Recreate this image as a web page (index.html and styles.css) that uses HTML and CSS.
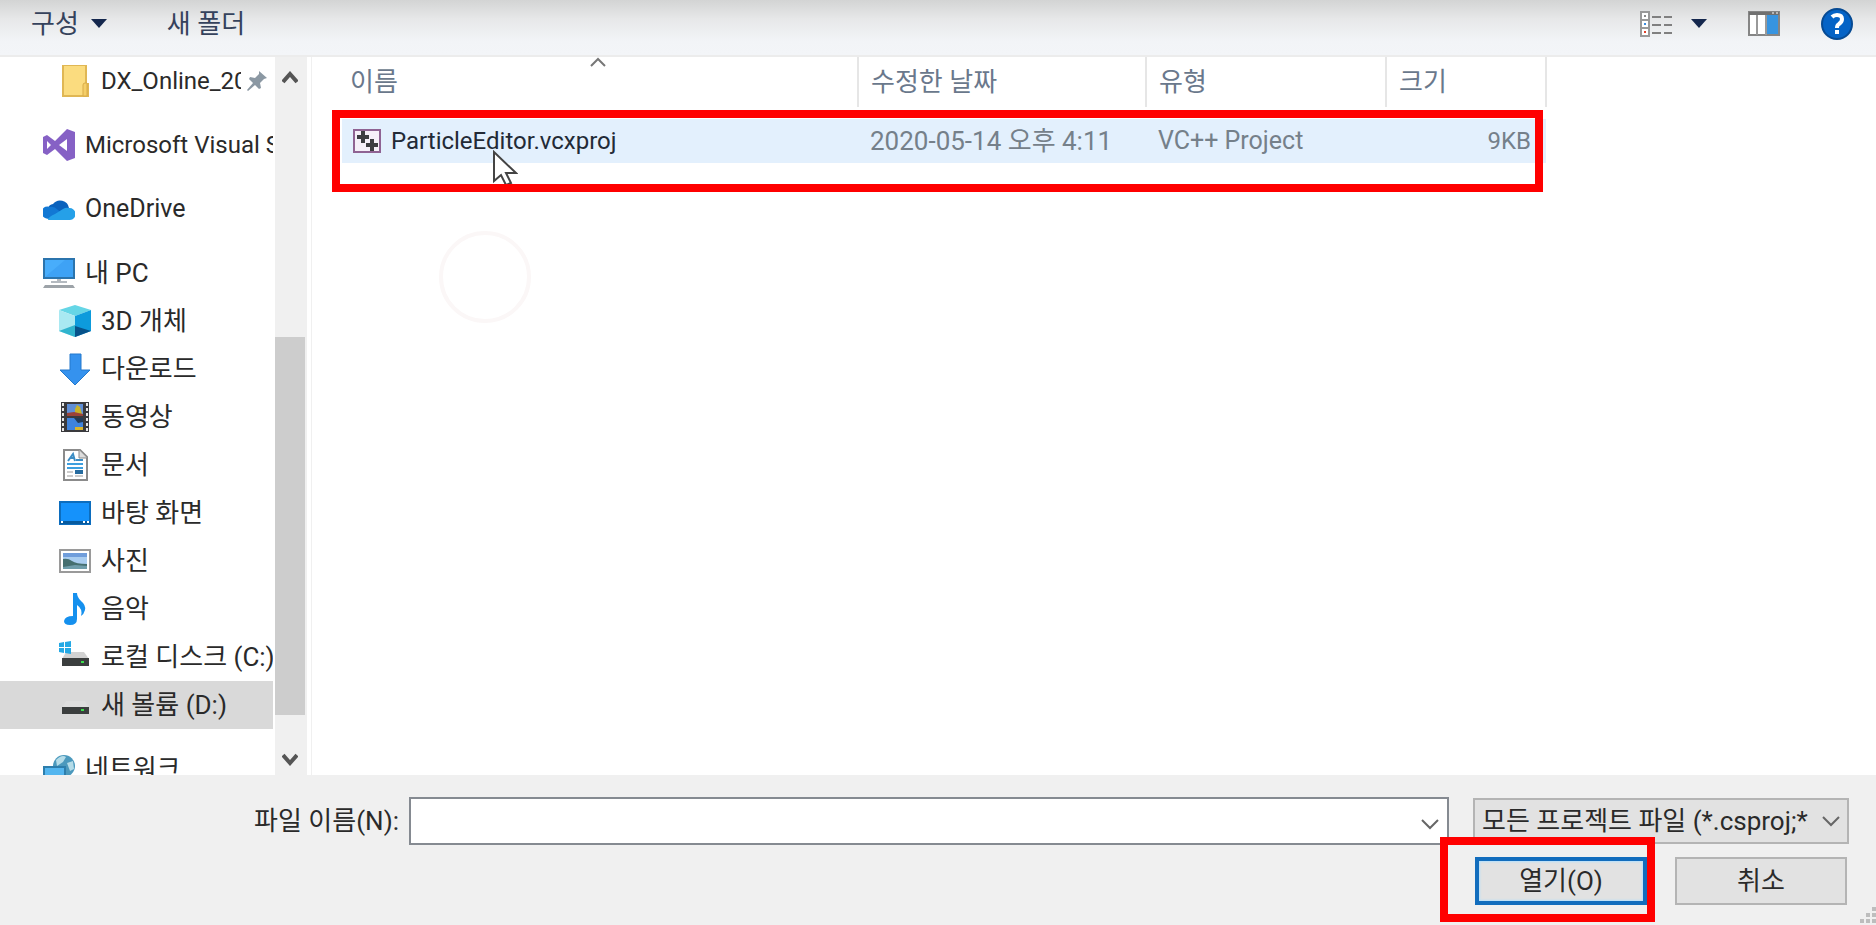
FILE: index.html
```
<!DOCTYPE html>
<html lang="ko">
<head>
    <meta charset="UTF-8">
    <meta name="viewport" content="width=device-width, initial-scale=1.0">
    <title>프로젝트 열기</title>
    <link rel="stylesheet" href="styles.css">
</head>
<body>

<header class="toolbar">
    <button class="tool" type="button">구성
        <svg width="16" height="9" viewBox="0 0 16 9"><path d="M0 0h16L8 9z" fill="#14274d"/></svg>
    </button>
    <button class="tool" type="button">새 폴더</button>
    <div class="toolbar-right">
        <button class="tool" type="button" aria-label="보기 변경">
            <svg width="34" height="28" viewBox="0 0 34 28">
                <path d="M2 2h8v24H2zM2 10h8M2 18h8" fill="#fff" stroke="#999" stroke-width="2"/>
                <path d="M13 7h9M25 7h8M13 15h9M25 15h8M13 23h9M25 23h8" stroke="#808080" stroke-width="2"/>
                <path d="M5 5h2v2H5z" fill="#888"/><path d="M5 13h2v2H5z" fill="#3b8de0"/><path d="M5 21h2v2H5z" fill="#e0402a"/>
            </svg>
            <svg width="16" height="9" viewBox="0 0 16 9"><path d="M0 0h16L8 9z" fill="#14274d"/></svg>
        </button>
        <button class="tool" type="button" aria-label="미리 보기 창">
            <svg width="32" height="25" viewBox="0 0 32 25">
                <path d="M1 1h30v23H1z" fill="#fff" stroke="#858585" stroke-width="2"/>
                <path d="M1 1h30v3H1z" fill="#707070"/>
                <path d="M9 4v20M18 4v20" stroke="#999" stroke-width="2"/>
                <path d="M19 4h11v19H19z" fill="#3794e0"/>
                <path d="M24 2h2M28 2h2" stroke="#fff" stroke-width="1"/>
            </svg>
        </button>
        <button class="tool" type="button" aria-label="도움말">
            <svg width="32" height="32" viewBox="0 0 32 32">
                <circle cx="16" cy="16" r="15" fill="#0563c6" stroke="#064a93" stroke-width="2"/>
                <path d="M11 9q2-2 5-2 5 0 5 4 0 3-3 5-2 1-2 4" fill="none" stroke="#fff" stroke-width="4"/>
                <path d="M14 22h4v4h-4z" fill="#fff"/>
            </svg>
        </button>
    </div>
</header>

<main class="browser">
    <nav class="tree">
        <ul>
            <li class="child latin">
                <a href="#dx"><svg class="icon" viewBox="0 0 32 32"><path d="M4 0h23v19h2v12H4z" fill="#fbdc7f" stroke="#e0b754" stroke-width="2"/><path d="M24 31V20q0-2 2-2h2v13z" fill="#f5cf69" stroke="#d9ac48"/></svg><span class="pinned">DX_Online_2020</span><svg class="pin" width="22" height="22" viewBox="0 0 22 22"><path d="M13 1l8 7-3 1-4 4 1 5-2 1-4-4-7 6-1-1 6-7-4-4 1-2 5 1 4-4z" fill="#8b98a3"/></svg></a>
            </li>
            <li class="group latin">
                <a href="#vs"><svg class="icon" viewBox="0 0 32 32"><path d="M24 0l8 3v26l-8 3L12 20l-8 6-4-2V8l4-2 8 6zM4 12v8l4-4zM16 16l8 6V10z" fill="#8661c5" fill-rule="evenodd"/></svg>Microsoft Visual Studio</a>
            </li>
            <li class="group">
                <a href="#onedrive"><svg class="icon" viewBox="0 0 32 32"><path d="M5 15a6 6 0 0 1 5-4 9 9 0 0 1 16 4l-8 8H5a6 6 0 0 1 0-8z" fill="#0a62bd"/><path d="M2 25a6 6 0 0 1 5-11q4-1 8 3l10 9H7q-3 0-5-1z" fill="#1278d4"/><path d="M5 27q0-3 7-6l8-5q3-2 6-1a6 6 0 0 1 1 12z" fill="#25a0e8"/></svg><span class="account">OneDrive</span></a>
            </li>
            <li class="group">
                <a href="#pc"><svg class="icon" viewBox="0 0 32 32"><path d="M1 2h30v19H1z" fill="#48adfb" stroke="#2b74ad" stroke-width="2"/><path d="M2 20L22 3h8v17z" fill="#3398f0" opacity=".5"/><path d="M14 22h4v2h6v2H8v-2h6z" fill="#b4bac0"/><path d="M2 28h28l2 3H0z" fill="#9da3a8"/></svg>내 PC</a>
                <ul>
                    <li class="child">
                        <a href="#objects"><svg class="icon" viewBox="0 0 32 32"><path d="M0 5l16-5 16 5-16 6z" fill="#65d6e6"/><path d="M0 5l16 6v21L0 26z" fill="#a9e9f2"/><path d="M0 26l16-6v12z" fill="#30b4ce"/><path d="M32 5l-16 6v21l16-6z" fill="#0d9bdc"/><path d="M32 26l-16-5v11z" fill="#07528a"/></svg>3D 개체</a>
                    </li>
                    <li class="child">
                        <a href="#downloads"><svg class="icon" viewBox="0 0 32 32"><path d="M11 1h11v16h9L16 32 1 17h10z" fill="#3592ee" stroke="#2479cc"/></svg>다운로드</a>
                    </li>
                    <li class="child">
                        <a href="#videos"><svg class="icon" viewBox="0 0 32 32"><path d="M2 1h28v30H2z" fill="#3a3a3d"/><path d="M4 2v29M28 2v29" stroke="#e8e8e8" stroke-width="2" stroke-dasharray="3 2"/><path d="M8 3h16v12H8z" fill="#608fd6"/><path d="M8 17h16v12H8z" fill="#3f83dc"/><path d="M16 13V8l2-4 3 2 2 7z" fill="#c8b32b"/><path d="M8 12l7-1 9 2v2H8z" fill="#9b4238"/><path d="M16 29v-3h8v3z" fill="#d8b42c"/><path d="M15 17h9v4l-5 1z" fill="#223b58"/></svg>동영상</a>
                    </li>
                    <li class="child">
                        <a href="#documents"><svg class="icon" viewBox="0 0 32 32"><path d="M5 1h16l7 7v23H5z" fill="#fff" stroke="#8b8b8b" stroke-width="2"/><path d="M20 1v8h8" fill="#ddd" stroke="#8b8b8b"/><path d="M9 12l5-7 2 7M11 9h5M17 11h7" fill="none" stroke="#3c8dc4" stroke-width="2"/><path d="M8 15h16M8 19h16" stroke="#3d9fdf" stroke-width="2"/><path d="M8 23h6M8 27h6M16 27h8" stroke="#999" stroke-width="1"/><path d="M16 21h8v4h-8z" fill="#276ca0"/></svg>문서</a>
                    </li>
                    <li class="child">
                        <a href="#desktop"><svg class="icon" viewBox="0 0 32 32"><path d="M1 5h30v22H1z" fill="#1592fb" stroke="#0c6dbe" stroke-width="2"/><path d="M1 24h30v3H1z" fill="#075a9e"/><path d="M2 25h2M24 25h2M28 25h2" stroke="#fff" stroke-width="2"/></svg>바탕 화면</a>
                    </li>
                    <li class="child">
                        <a href="#pictures"><svg class="icon" viewBox="0 0 32 32"><path d="M1 5h30v22H1z" fill="#fff" stroke="#9a9a9a" stroke-width="2"/><path d="M4 8h24v16H4z" fill="#a9cdf0"/><path d="M4 8h24v4H4z" fill="#6f9ddb"/><path d="M4 14q5-1 9 2t15 3v5H4z" fill="#456f70"/><path d="M4 22l12-2 12 1v3H4z" fill="#6f9dab"/></svg>사진</a>
                    </li>
                    <li class="child">
                        <a href="#music"><svg class="icon" viewBox="0 0 32 32"><path d="M14 0h4q0 4 4 8 5 4 4 9-1 4-4 6 2-7-4-11v14q0 6-7 6-6 0-6-4 1-5 9-5z" fill="#1590ee"/></svg>음악</a>
                    </li>
                    <li class="child">
                        <a href="#c"><svg class="icon" viewBox="0 0 32 32"><path d="M7 11h18l5 7H3z" fill="#d2d2d2"/><path d="M0 2l5-1v5H0zM6 1l6-1v6H6zM0 7h5v5l-5-1zM6 7h6v6l-6-1z" fill="#24a9e5"/><path d="M3 17h27v8H3z" fill="#3b3e3e"/><path d="M22 20h3v2h-3z" fill="#3be04c"/></svg>로컬 디스크 (C:)</a>
                    </li>
                    <li class="child selected">
                        <a href="#d"><svg class="icon" viewBox="0 0 32 32"><path d="M7 12h19l4 7H3z" fill="#dedede"/><path d="M3 18h27v7H3z" fill="#3b3e3e"/><path d="M22 20h3v2h-3z" fill="#3be04c"/></svg>새 볼륨 (D:)</a>
                    </li>
                </ul>
            </li>
            <li class="group">
                <a href="#network"><svg class="icon" viewBox="0 0 32 32"><circle cx="21" cy="13" r="11" fill="#4b99bd"/><path d="M13 7q6-6 10-3l-3 5-6 4zM24 10l6-2 1 8-4 2z" fill="#b5dce8"/><path d="M1 14h21v16H1z" fill="#54b6ef" stroke="#2d7eac" stroke-width="2"/></svg>네트워크</a>
            </li>
        </ul>
    </nav>
    <div class="scrollbar">
        <button type="button" aria-label="위로"><svg width="16" height="13" viewBox="0 0 16 13"><path d="M1 11l7-8 7 8" fill="none" stroke="#555" stroke-width="4"/></svg></button>
        <div class="track-above"></div>
        <div class="thumb"></div>
        <div class="track-below"></div>
        <button type="button" aria-label="아래로"><svg width="16" height="13" viewBox="0 0 16 13"><path d="M1 2l7 8 7-8" fill="none" stroke="#555" stroke-width="4"/></svg></button>
    </div>
    <section class="files">
        <table>
            <thead>
                <tr>
                    <th class="name">이름<svg class="sort" width="16" height="10" viewBox="0 0 16 10"><path d="M1 9l7-7 7 7" fill="none" stroke="#777" stroke-width="2"/></svg></th>
                    <th class="date">수정한 날짜</th>
                    <th class="type">유형</th>
                    <th class="size">크기</th>
                </tr>
            </thead>
            <tbody>
                <tr>
                    <td class="name"><svg width="28" height="24" viewBox="0 0 28 24"><path d="M1 1h26v22H1z" fill="#f5eff8" stroke="#8f6393" stroke-width="2"/><path d="M10 2v12M4 8h12M19 10v12M13 16h12" stroke="#3c3c40" stroke-width="4"/></svg>ParticleEditor.vcxproj</td>
                    <td class="date">2020-05-14 오후 4:11</td>
                    <td class="type">VC++ Project</td>
                    <td class="size">9KB</td>
                </tr>
            </tbody>
        </table>
        <div class="busy"></div>
        <div class="mark mark-file">
            <svg class="cursor" width="26" height="34" viewBox="0 0 26 34"><path d="M2 2v29l7-6 5 10 5-2-5-10h10z" fill="#fff" stroke="#444" stroke-width="2"/></svg>
        </div>
    </section>
</main>

<footer class="footer">
    <div class="line">
        <label for="filename">파일 이름(N):</label>
        <div class="combo">
            <input type="text" id="filename">
            <button type="button" aria-label="최근 파일"><svg width="18" height="11" viewBox="0 0 18 11"><path d="M1 1l8 8 8-8" fill="none" stroke="#666" stroke-width="2"/></svg></button>
        </div>
        <div class="filter">
            <select aria-label="파일 형식">
                <option>모든 프로젝트 파일 (*.csproj;*.vcxproj)</option>
            </select>
            <svg width="18" height="11" viewBox="0 0 18 11"><path d="M1 1l8 8 8-8" fill="none" stroke="#666" stroke-width="2"/></svg>
        </div>
    </div>
    <div class="line actions">
        <div class="open">
            <button class="btn primary" type="button">열기(O)</button>
            <div class="mark mark-open"></div>
        </div>
        <button class="btn" type="button">취소</button>
    </div>
    <svg class="grip" width="16" height="18" viewBox="0 0 16 18"><path d="M12 0h4v4h-4zM6 6h4v4H6zM12 6h4v4h-4zM0 12h4v4H0zM6 12h4v4H6zM12 12h4v4h-4z" fill="#bdbdbd"/></svg>
</footer>

</body>
</html>
```
FILE: styles.css
```
* {
    box-sizing: border-box;
}

body {
    margin: 0;
    height: 100vh;
    display: flex;
    flex-direction: column;
    overflow: hidden;
    background-color: #ffffff;
    color: #2a2a2a;
    font-family: Roboto, "Noto Sans CJK KR", sans-serif;
    font-size: 26px;
    line-height: 32px;
}

button, input, select {
    font: inherit;
    color: inherit;
}

button {
    padding: 0;
    border: none;
    background: none;
}

svg {
    flex: none;
}

ul {
    margin: 0;
    padding: 0;
    list-style: none;
}

/* toolbar */

.toolbar {
    display: flex;
    align-items: center;
    gap: 60px;
    height: 57px;
    flex: none;
    padding: 0 23px 8px 31px;
    background: linear-gradient(#d3d4d4, #e7e8e9 35%, #f2f4f7 75%, #f3f5f8);
    border-bottom: 2px solid #ececec;
    color: #35425c;
}

.tool {
    display: flex;
    align-items: center;
    gap: 12px;
}

.toolbar-right {
    display: flex;
    align-items: center;
    gap: 41px;
    margin-left: auto;
}

.toolbar-right .tool {
    gap: 18px;
}

/* folder tree */

.browser {
    display: flex;
    flex: 1;
    min-height: 0;
}

.tree {
    width: 273px;
    margin-right: 2px;
    overflow: hidden;
}

.tree a {
    display: flex;
    align-items: center;
    height: 48px;
    padding-left: 43px;
    color: inherit;
    text-decoration: none;
    white-space: nowrap;
}

.tree .child a {
    padding-left: 59px;
}

.tree .group {
    margin-top: 16px;
}

.icon {
    width: 32px;
    height: 32px;
    margin-right: 10px;
}

.latin {
    font-size: 24px;
}

.account {
    font-size: 25px;
}

.pinned {
    width: 140px;
    overflow: hidden;
}

.pin {
    margin-left: 5px;
}

.selected {
    background-color: #d9d9d9;
}

.scrollbar {
    display: flex;
    flex-direction: column;
    width: 32px;
    background-color: #f0f0f0;
}

.scrollbar button {
    height: 36px;
    padding-right: 2px;
}

.track-above {
    flex: 244;
}

.thumb {
    flex: 378;
    margin-right: 2px;
    background-color: #cdcdcd;
}

.track-below {
    flex: 24;
}

/* file list */

.files {
    position: relative;
    flex: 1;
    margin-left: 4px;
    padding-left: 30px;
    border-left: 1px solid #f0f0f0;
}

table {
    table-layout: fixed;
    width: 1205px;
    border-collapse: collapse;
}

th {
    height: 50px;
    padding: 0 12px;
    border-right: 2px solid #e6e6e6;
    color: #6a788c;
    font-weight: normal;
    text-align: left;
}

th.name {
    position: relative;
    width: 516px;
    padding-left: 8px;
}

th.date {
    width: 288px;
}

th.type {
    width: 240px;
}

.sort {
    position: absolute;
    top: 0;
    left: 248px;
}

tbody::before {
    content: "";
    display: block;
    height: 12px;
}

tbody tr {
    background-color: #e3f0fd;
}

td {
    height: 44px;
    padding: 0 12px;
    color: #75808a;
    white-space: nowrap;
}

td.name {
    display: flex;
    align-items: center;
    gap: 10px;
    padding-left: 11px;
    color: #222a36;
    font-size: 24px;
}

td.type {
    font-size: 25px;
}

td.size {
    padding-right: 15px;
    font-size: 24px;
    text-align: right;
}

.busy {
    position: absolute;
    top: 174px;
    left: 127px;
    width: 92px;
    height: 92px;
    border: 4px solid #fbf7f7;
    border-radius: 50%;
}

/* red highlight frames */

.mark {
    position: absolute;
    border: 8px solid #ff0000;
    overflow: hidden;
    pointer-events: none;
}

.mark-file {
    top: 53px;
    left: 20px;
    width: 1211px;
    height: 82px;
}

.cursor {
    position: absolute;
    top: 32px;
    left: 152px;
}

.mark-open {
    top: -20px;
    left: -35px;
    right: -8px;
    bottom: -17px;
}

/* bottom bar */

.footer {
    position: relative;
    flex: none;
    padding: 22px 27px 20px 0;
    background-color: #f0f0f0;
}

.line {
    display: flex;
    align-items: center;
}

.line label {
    width: 409px;
    padding-right: 10px;
    text-align: right;
}

.combo {
    display: flex;
    flex: 1;
    height: 48px;
    border: 2px solid #858a91;
    background-color: #ffffff;
}

.combo input {
    flex: 1;
    min-width: 0;
    border: none;
    outline: none;
    background: none;
}

.combo button {
    width: 34px;
}

.filter {
    position: relative;
    width: 376px;
    margin-left: 24px;
}

.filter select {
    appearance: none;
    width: 100%;
    height: 46px;
    padding: 0 38px 0 7px;
    border: 2px solid #b4b4b4;
    border-radius: 0;
    background-color: #e2e2e2;
}

.filter svg {
    position: absolute;
    top: 18px;
    right: 9px;
    pointer-events: none;
}

.actions {
    justify-content: flex-end;
    gap: 28px;
    margin-top: 12px;
    padding-right: 2px;
}

.open {
    position: relative;
}

.btn {
    display: block;
    width: 172px;
    height: 48px;
    border: 2px solid #b4b4b4;
    background-color: #e2e2e2;
}

.primary {
    border: 4px solid #126dbd;
    box-shadow: inset 0 0 2px 1px #b5e0fc;
}

.grip {
    position: absolute;
    right: 0;
    bottom: 0;
}
```
